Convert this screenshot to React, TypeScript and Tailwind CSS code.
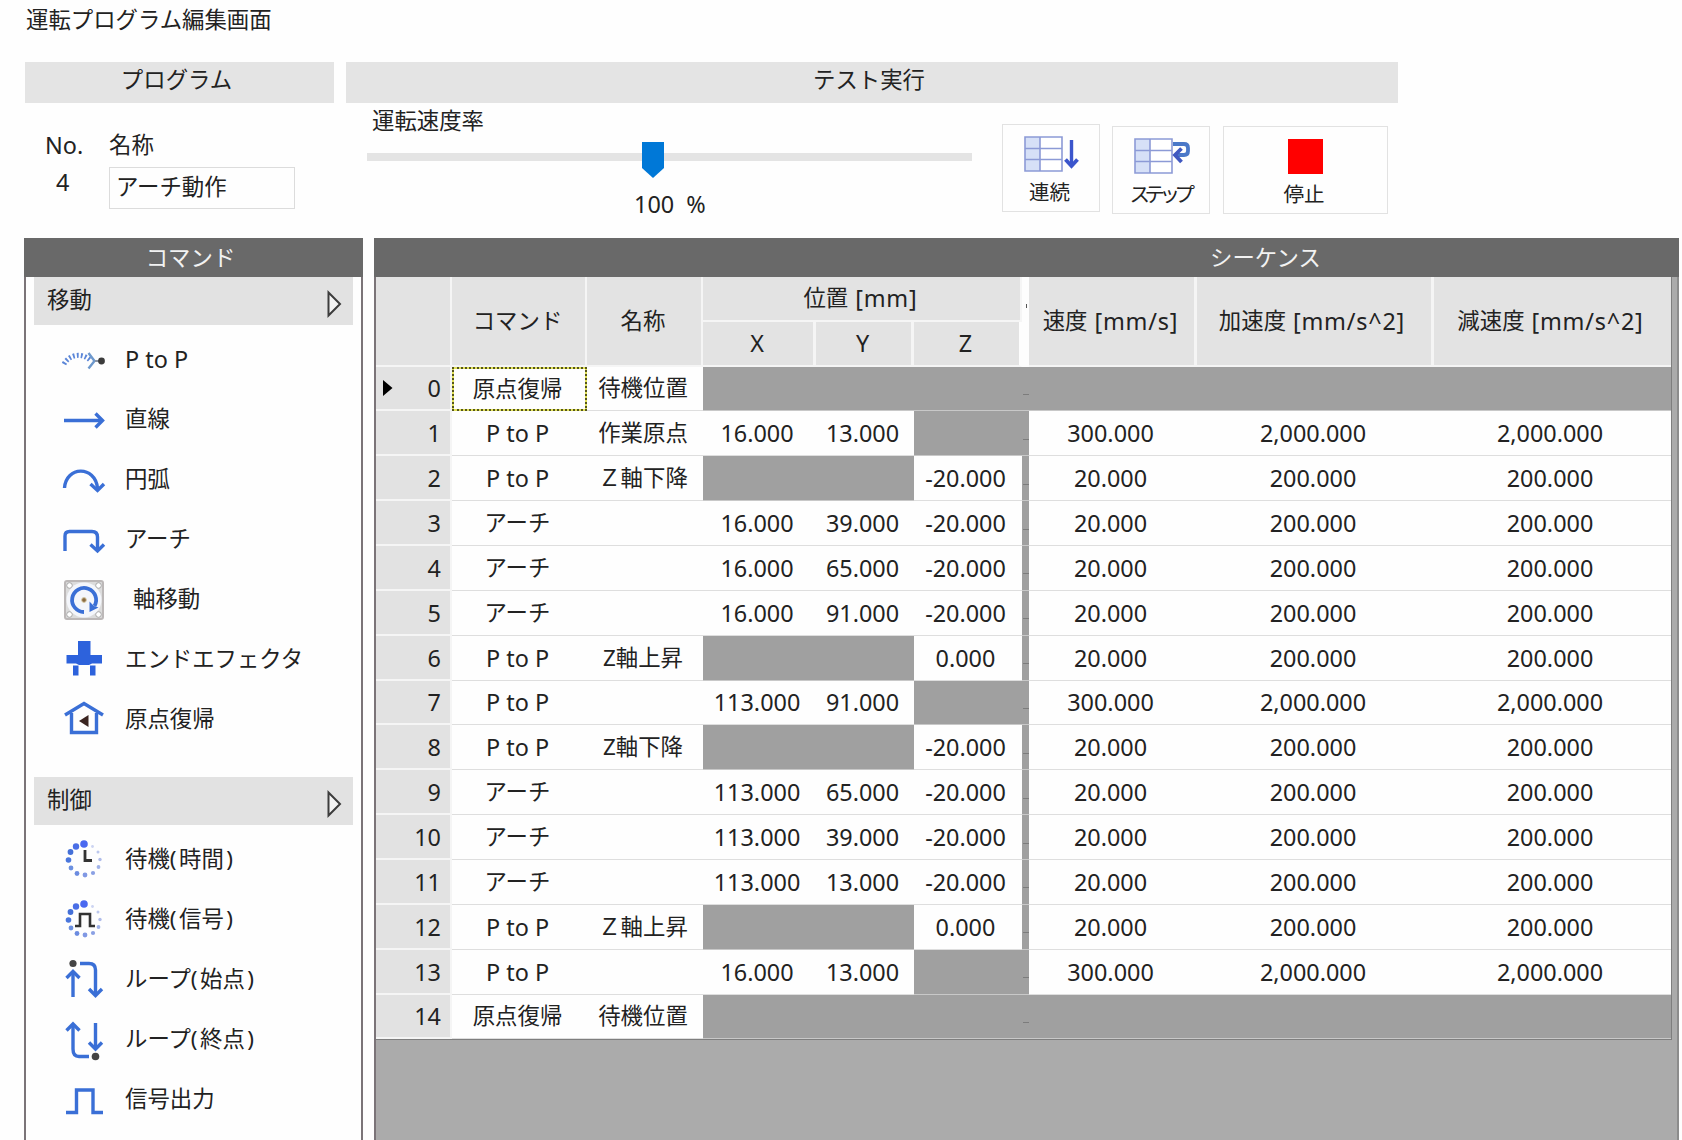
import { useState, type ReactNode } from "react";
import clsx from "clsx";

const BLUE = "#3a6fd6";

/* ---------- icons ---------- */

const Icon = ({ children }: { children: ReactNode }) => (
  <svg width="44" height="44" viewBox="0 0 44 44" fill="none" stroke={BLUE} strokeWidth="3.4" className="shrink-0">
    {children}
  </svg>
);

const PtoPIcon = () => (
  <Icon>
    <path d="M2 25C7 16 19 13 28 21" stroke="#5b86d8" strokeWidth="5" strokeDasharray="1.8 2.2" />
    <path d="M26.500 14L32.500 22L26.500 29.500" stroke="#6d98cc" strokeWidth="2.4" />
    <path d="M33 22H37" stroke="#8a94a4" strokeWidth="2" />
    <circle cx="39.500" cy="22" r="3.400" fill="#3c3c3c" stroke="none" />
  </Icon>
);

const LineIcon = () => (
  <Icon>
    <path d="M2 21.500H39" />
    <path d="M33.500 14.500L40.500 21.500L33.500 28.500" />
  </Icon>
);

const ArcIcon = () => (
  <Icon>
    <path d="M2.500 29C4 7 33 6 35.500 29" />
    <path d="M28.500 25L35.500 31.500L42 25" />
  </Icon>
);

const ArchIcon = () => (
  <Icon>
    <path d="M3 32V17Q3 12.500 7.500 12.500H30Q35.500 12.500 35.500 18V30" />
    <path d="M28.500 25.500L35.500 32L42 25.500" />
  </Icon>
);

const AxisIcon = () => (
  <Icon>
    <rect x="3" y="2" width="38" height="38" rx="2" fill="#dcdcdc" stroke="#bcb8b8" strokeWidth="2" />
    <circle cx="7.500" cy="6.500" r="2.800" fill="#fff" stroke="#a8a8a8" strokeWidth="1" />
    <circle cx="36.500" cy="6.500" r="2.800" fill="#fff" stroke="#a8a8a8" strokeWidth="1" />
    <circle cx="7.500" cy="35.500" r="2.800" fill="#fff" stroke="#a8a8a8" strokeWidth="1" />
    <circle cx="36.500" cy="35.500" r="2.800" fill="#fff" stroke="#a8a8a8" strokeWidth="1" />
    <circle cx="22" cy="21" r="17.500" fill="#f4f6fb" stroke="none" />
    <path d="M22 33A12 12 0 1 1 32.500 27" strokeWidth="3.800" />
    <path d="M27.500 22.500V33L36.500 28.500L32 27Z" fill={BLUE} stroke="none" />
    <circle cx="22" cy="21" r="2.400" fill="#8a6a40" stroke="#d8cba8" strokeWidth="1" />
  </Icon>
);

const EffectorIcon = () => (
  <Icon>
    <path d="M16 2H28.500V16H40V24.500H30L27 26H17L14 24.500H4.500V16H16Z" fill="#2d62dc" stroke="none" />
    <path d="M11 26.500H16.500V36.500H11ZM28 26.500H33.500V36.500H28Z" fill="#2d62dc" stroke="none" />
  </Icon>
);

const HomeIcon = () => (
  <Icon>
    <path d="M3 16L22 4.500L41 16" />
    <path d="M9.500 14V33.500H34.500V14" />
    <path d="M17 22L26.500 16V28Z" fill="#3a2420" stroke="none" />
  </Icon>
);

const DOTS = [
  [22, 5, 3.8, "#4a68f0"],
  [14, 7.5, 3.2, "#4a6ee6"],
  [8.5, 13, 2.9, "#4470d8"],
  [6.5, 21, 2.8, "#4a76dc"],
  [9, 29, 2.4, "#6c90e0"],
  [15, 34.5, 2.4, "#6c8ce0"],
  [23, 36, 2.4, "#8098e4"],
  [31, 34, 2.1, "#8aa0e4"],
  [36.5, 28, 1.9, "#a0b2e8"],
  [38, 20.5, 1.7, "#b0bcea"],
  [36, 13, 1.5, "#bcc8ee"],
  [30.5, 7.5, 1.4, "#ccd4f2"],
] as const;

const Dots = () => (
  <>
    {DOTS.map(([x, y, r, fill]) => (
      <circle key={`${x}-${y}`} cx={x} cy={y} r={r} fill={fill} stroke="none" />
    ))}
  </>
);

const WaitTimeIcon = () => (
  <Icon>
    <Dots />
    <path d="M23 11V21.500H30" stroke="#333" strokeWidth="2.800" />
  </Icon>
);

const WaitSignalIcon = () => (
  <Icon>
    <Dots />
    <path d="M13 27H18V15H28V27H33" stroke="#333" strokeWidth="2.600" />
  </Icon>
);

const LoopStartIcon = () => (
  <Icon>
    <circle cx="11" cy="4.500" r="3.600" fill="#444" stroke="none" />
    <path d="M11 38V13" />
    <path d="M4.500 19L11 12.500L17.500 19" />
    <path d="M18 4.500H27Q33.500 4.500 33.500 11V36" />
    <path d="M27 30L33.500 36.500L40 30" />
  </Icon>
);

const LoopEndIcon = () => (
  <Icon>
    <path d="M11 5V30Q11 37.500 17 37.500H27" />
    <path d="M4.500 11.500L11 5L17.500 11.500" />
    <path d="M33.500 4V28" />
    <path d="M27 23.500L33.500 30L40 23.500" />
    <circle cx="33.500" cy="37.500" r="3.800" fill="#444" stroke="none" />
  </Icon>
);

const SignalOutIcon = () => (
  <Icon>
    <path d="M4 33.500H14.500V11H31V33.500H41" />
  </Icon>
);

const SheetIcon = ({ children }: { children: ReactNode }) => (
  <svg width="58" height="36" viewBox="0 0 58 36" fill="none" className="ml-1">
    <rect x="1" y="1" width="37" height="34" fill="#fff" />
    <rect x="1" y="1" width="15" height="34" fill="#d6e0f7" />
    <path d="M1 1H38V35H1ZM16 1V35M1 12.500H38M1 23.500H38" stroke="#8c9ad6" strokeWidth="1.600" />
    {children}
  </svg>
);

/* ---------- data ---------- */

const GROUPS = [
  {
    title: "移動",
    items: [
      { label: "P to P", icon: <PtoPIcon />, latin: true },
      { label: "直線", icon: <LineIcon /> },
      { label: "円弧", icon: <ArcIcon /> },
      { label: "アーチ", icon: <ArchIcon /> },
      { label: "軸移動", icon: <AxisIcon />, indent: true },
      { label: "エンドエフェクタ", icon: <EffectorIcon /> },
      { label: "原点復帰", icon: <HomeIcon /> },
    ],
  },
  {
    title: "制御",
    items: [
      { label: "待機", arg: "時間", icon: <WaitTimeIcon /> },
      { label: "待機", arg: "信号", icon: <WaitSignalIcon /> },
      { label: "ループ", arg: "始点", icon: <LoopStartIcon /> },
      { label: "ループ", arg: "終点", icon: <LoopEndIcon /> },
      { label: "信号出力", icon: <SignalOutIcon /> },
    ],
  },
] as { title: string; items: { label: string; arg?: string; icon: ReactNode; latin?: boolean; indent?: boolean }[] }[];

type Row = { cmd: string; name?: string; x?: string; y?: string; z?: string; v?: string; acc?: string; dec?: string };

const FAST = { v: "300.000", acc: "2,000.000", dec: "2,000.000" };
const SLOW = { v: "20.000", acc: "200.000", dec: "200.000" };

const ROWS: Row[] = [
  { cmd: "原点復帰", name: "待機位置" },
  { cmd: "P to P", name: "作業原点", x: "16.000", y: "13.000", ...FAST },
  { cmd: "P to P", name: "Ｚ軸下降", z: "-20.000", ...SLOW },
  { cmd: "アーチ", x: "16.000", y: "39.000", z: "-20.000", ...SLOW },
  { cmd: "アーチ", x: "16.000", y: "65.000", z: "-20.000", ...SLOW },
  { cmd: "アーチ", x: "16.000", y: "91.000", z: "-20.000", ...SLOW },
  { cmd: "P to P", name: "Z軸上昇", z: "0.000", ...SLOW },
  { cmd: "P to P", x: "113.000", y: "91.000", ...FAST },
  { cmd: "P to P", name: "Z軸下降", z: "-20.000", ...SLOW },
  { cmd: "アーチ", x: "113.000", y: "65.000", z: "-20.000", ...SLOW },
  { cmd: "アーチ", x: "113.000", y: "39.000", z: "-20.000", ...SLOW },
  { cmd: "アーチ", x: "113.000", y: "13.000", z: "-20.000", ...SLOW },
  { cmd: "P to P", name: "Ｚ軸上昇", z: "0.000", ...SLOW },
  { cmd: "P to P", x: "16.000", y: "13.000", ...FAST },
  { cmd: "原点復帰", name: "待機位置" },
];

const COLS = "grid grid-cols-[76px_135px_116px_113px_98px_108px_7px_168px_237px_237px]";

/* ---------- sequence table ---------- */

const HeadCell = ({ label, unit, className }: { label?: string; unit?: string; className?: string }) => (
  <div className={clsx("flex items-center justify-center border-[#f5f5f5] bg-[#e3e3e3] pr-0.5 whitespace-pre", className)}>
    {label}
    {unit && <span className="text-[23.4px] tracking-[0.8px]"> {unit}</span>}
  </div>
);

const Cell = ({ value, off }: { value?: string; off?: boolean }) => (
  <div
    className={clsx(
      "flex items-center justify-center border-b pr-[5px] text-[23.4px]",
      off ? "border-[#c8c8c8] bg-[#a0a0a0]" : "border-[#dedede] bg-[#fefefe]",
    )}
  >
    {value}
  </div>
);

const SequenceRow = ({ row, index, selected }: { row: Row; index: number; selected: boolean }) => {
  const latin = row.cmd === "P to P";
  return (
    <div className={clsx(COLS, "h-[44.86px]")}>
      <div className="flex items-center justify-between border-r-2 border-b-2 border-[#f5f5f5] bg-[#e2e2e2] pt-px pr-[9px] pl-[7px] text-[23.4px]">
        {selected ? (
          <svg width="10" height="18" viewBox="0 0 10 18">
            <path d="M0 1L9.500 9L0 17Z" fill="#000" />
          </svg>
        ) : (
          <span />
        )}
        <span>{index}</span>
      </div>
      {selected ? (
        <div className="bg-[#e2e25a]">
          <div className="flex h-full items-center justify-center border-2 border-dotted border-[#55551a] bg-[#fefefe] bg-clip-padding pr-1">
            {row.cmd}
          </div>
        </div>
      ) : (
        <div
          className={clsx(
            "flex items-center justify-center border-b border-[#dedede] bg-[#fefefe] pr-1",
            latin && "text-[23.4px]",
          )}
        >
          {row.cmd}
        </div>
      )}
      <div className="flex items-center justify-center border-b border-[#dedede] bg-[#fefefe] pr-1">{row.name}</div>
      <Cell value={row.x} off={!row.x} />
      <Cell value={row.y} off={!row.y} />
      <Cell value={row.z} off={!row.z} />
      <div className="flex items-center justify-center border-b border-[#c8c8c8] bg-[#a0a0a0]">
        <span className="mt-3 h-px w-1.5 bg-[#7c7c7c]" />
      </div>
      <Cell value={row.v} off={!row.v} />
      <Cell value={row.acc} off={!row.acc} />
      <Cell value={row.dec} off={!row.dec} />
    </div>
  );
};

const SequencePanel = () => (
  <section className="flex w-[1305px] flex-col">
    <h2 className="flex h-[39px] shrink-0 items-center justify-center bg-[#696969] pt-0.5 pl-[478px] text-[#f2f2f2]">
      シーケンス
    </h2>
    <div className="flex-1 border-r-2 border-l-2 border-r-[#8c8c8c] border-l-[#7b7478] bg-[#ababab]">
      <div className="w-[1296px] border-r border-b border-[#7e7e7e]">
        <div className={clsx(COLS, "h-[90px] grid-rows-[45px_45px]")}>
          <HeadCell className="row-span-2 border-r-2 border-b-2" />
          <HeadCell label="コマンド" className="row-span-2 border-r-2 border-b-2" />
          <HeadCell label="名称" className="row-span-2 border-r-2 border-b-2" />
          <HeadCell label="位置" unit="[mm]" className="col-span-3 border-r-2 border-b-2" />
          <div className="row-span-2 bg-[#fdfdfd] pt-[27px] pl-1">
            <div className="h-1 w-px bg-[#555]" />
          </div>
          <HeadCell label="速度" unit="[mm/s]" className="row-span-2 border-r-3 border-b-2" />
          <HeadCell label="加速度" unit="[mm/s^2]" className="row-span-2 border-r-3 border-b-2 pr-1" />
          <HeadCell label="減速度" unit="[mm/s^2]" className="row-span-2 border-b-2 pr-1" />
          <HeadCell label="X" className="border-r-3 border-b-2 text-[23.4px]" />
          <HeadCell label="Y" className="border-r-3 border-b-2 text-[23.4px]" />
          <HeadCell label="Z" className="border-r-3 border-b-2 border-r-[#fdfdfd] text-[23.4px]" />
        </div>
        {ROWS.map((row, i) => (
          <SequenceRow key={i} row={row} index={i} selected={i === 0} />
        ))}
      </div>
    </div>
  </section>
);

/* ---------- command list ---------- */

const CommandPanel = () => (
  <section className="flex w-[339px] flex-col">
    <h2 className="flex h-[39px] shrink-0 items-center justify-center bg-[#696969] pt-0.5 pr-1.5 text-[#f2f2f2]">コマンド</h2>
    <div className="flex-1 border-x-2 border-[#7b7478] bg-[#fefefe] px-[8px]">
      {GROUPS.map((group) => (
        <div key={group.title} className="mb-[26px]">
          <div className="mb-[6px] flex h-[48px] items-center justify-between bg-[#e2e2e2] pr-[11px] pl-[13px]">
            <span className="pb-0.5">{group.title}</span>
            <svg width="15" height="28" viewBox="0 0 15 28" className="mt-1.5">
              <path d="M1.500 2.500L13 14L1.500 25.500Z" fill="#f4f4f4" stroke="#3c3c3c" strokeWidth="2" />
            </svg>
          </div>
          {group.items.map((item) => (
            <button
              key={item.label + (item.arg ?? "")}
              type="button"
              className="flex h-[60px] w-full items-center pl-[28px]"
            >
              {item.icon}
              <span
                className={clsx(
                  "pb-1 whitespace-nowrap",
                  item.latin && "text-[23.4px]",
                  item.indent ? "ml-[27px]" : "ml-[19px]",
                )}
              >
                {item.label}
                {item.arg && (
                  <>
                    <span className="pr-[2.500px]">(</span>
                    {item.arg}
                    <span className="pl-[2.500px]">)</span>
                  </>
                )}
              </span>
            </button>
          ))}
        </div>
      ))}
    </div>
  </section>
);

/* ---------- top area ---------- */

const BarTitle = ({ children }: { children: ReactNode }) => (
  <h2 className="flex h-[41px] items-center justify-center bg-[#e4e4e4] pr-1.5 pb-1.5">{children}</h2>
);

const RunButton = ({ icon, children, className }: { icon: ReactNode; children: ReactNode; className?: string }) => (
  <button
    type="button"
    className={clsx("flex h-[88px] flex-col items-center border border-[#e2e2e2] bg-[#fefefe] pt-[11px] text-[20.500px]", className)}
  >
    <span className="flex h-9 items-center">{icon}</span>
    <span className="mt-[9px] pr-[3px] leading-[22px]">{children}</span>
  </button>
);

export default function App() {
  const [name, setName] = useState("アーチ動作");

  return (
    <main className="flex h-[1140px] w-[1682px] flex-col overflow-hidden bg-[#fefefe] font-['Noto_Sans','Noto_Sans_CJK_JP',sans-serif] text-[22.4px] leading-[26px] text-[#222]">
      <h1 className="h-[62px] shrink-0 pt-[7px] pl-[26px]">運転プログラム編集画面</h1>

      <div className="flex h-[175.500px] shrink-0 gap-3 pl-[25px]">
        <section className="w-[309px]">
          <BarTitle>プログラム</BarTitle>
          <div className="flex pt-[29px] pl-[20px]">
            <div className="flex w-[64px] flex-col gap-[11px] text-[23.4px]">
              <span>No.</span>
              <span className="pl-[11px]">4</span>
            </div>
            <div>
              <div>名称</div>
              <input
                value={name}
                onChange={(e) => setName(e.target.value)}
                className="mt-[9px] block h-[42px] w-[186px] border border-[#dcdcdc] bg-[#fefefe] px-[6px] pb-1.5 outline-none"
              />
            </div>
          </div>
        </section>

        <section className="w-[1052px]">
          <BarTitle>テスト実行</BarTitle>
          <div className="flex pl-[21px]">
            <div className="w-[605px] pt-[5px]">
              <div className="pl-[5px]">運転速度率</div>
              <div className="relative mt-[19px] h-2 bg-[#e4e4e4]">
                <svg width="22" height="36" viewBox="0 0 22 36" className="absolute -top-[11px] left-[275px]">
                  <path d="M0 0H22V26L11 36L0 26Z" fill="#0078d7" />
                </svg>
              </div>
              <div className="mt-[30px] pl-[267px] text-[23.4px] whitespace-pre">100  %</div>
            </div>
            <RunButton
              className="mt-[21px] ml-[30px] w-[98px]"
              icon={
                <SheetIcon>
                  <path d="M47.500 4V29" stroke="#3b55cc" strokeWidth="3.400" />
                  <path d="M41.500 23.500L47.500 30L53.500 23.500" stroke="#3b55cc" strokeWidth="3.800" />
                </SheetIcon>
              }
            >
              連続
            </RunButton>
            <RunButton
              className="mt-[23px] ml-[12px] w-[98px]"
              icon={
                <SheetIcon>
                  <path d="M39 6H50Q54 6 54 10V13Q54 17 50 17H43" stroke="#4a78c8" strokeWidth="3.800" />
                  <path d="M47.500 10.500L41 17L47.500 24" stroke="#4058c0" strokeWidth="3.800" />
                </SheetIcon>
              }
            >
              <span className="-tracking-[5.500px]">ステップ</span>
            </RunButton>
            <RunButton className="mt-[23px] ml-[13px] w-[165px]" icon={<span className="h-[35px] w-[35px] bg-[#ff0000]" />}>
              停止
            </RunButton>
          </div>
        </section>
      </div>

      <div className="flex flex-1 gap-[11px] pl-[24px]">
        <CommandPanel />
        <SequencePanel />
      </div>
    </main>
  );
}
